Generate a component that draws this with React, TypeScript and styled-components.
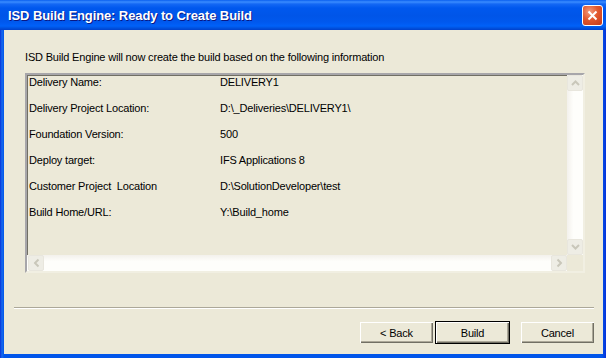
import React from "react";
import styled, { createGlobalStyle } from "styled-components";

const Global = createGlobalStyle`
  html, body { margin: 0; padding: 0; background: #ECE9D8; overflow: hidden; }
  #root { width: 606px; height: 358px; }
`;

const Window = styled.div`
  width: 606px;
  height: 358px;
  display: flex;
  flex-direction: column;
  background: linear-gradient(to right, #0831D9 0px, #166AEE 2px, #0055EA 4px, #0055EA 602px, #0831D9 606px);
  box-sizing: border-box;
  font-family: "Liberation Sans", Arial, sans-serif;
  font-size: 11px;
  letter-spacing: -0.18px;
  color: #000;
`;

const TitleBar = styled.div`
  height: 30px;
  flex: none;
  display: flex;
  align-items: center;
  justify-content: space-between;
  padding: 0 3px 0 8px;
  box-sizing: border-box;
  background: linear-gradient(
    to bottom,
    #0A5FEF 0px,
    #3A8CFF 2px,
    #1468F4 4px,
    #0058EE 8px,
    #0055E8 16px,
    #0058EE 22px,
    #0061F8 26px,
    #0052E0 28px,
    #0041CC 30px
  );
`;

const Title = styled.span`
  font-family: "Liberation Sans", Arial, sans-serif;
  font-weight: bold;
  font-size: 13px;
  color: #fff;
  text-shadow: 1px 1px 0 #0A1883;
  letter-spacing: -0.1px;
  margin-top: 1px;
`;

const CloseButton = styled.div`
  width: 21px;
  height: 21px;
  box-sizing: border-box;
  border: 1px solid #fff;
  border-radius: 3px;
  background: radial-gradient(circle at 35% 30%, #F29B7F 0%, #E2582E 45%, #C5391A 100%);
  display: flex;
  align-items: center;
  justify-content: center;
  margin-top: 1px;
`;

const Body = styled.div`
  flex: 1;
  margin: 0 3px 4px 4px;
  background: #ECE9D8;
  display: flex;
  flex-direction: column;
  padding-top: 21px;
`;

const Intro = styled.div`
  height: 13px;
  line-height: 13px;
  margin-left: 21px;
`;

const ListBox = styled.div`
  margin: 9px 0 0 21px;
  width: 560px;
  height: 200px;
  box-sizing: border-box;
  border-style: solid;
  border-width: 2px;
  border-color: #A7A6AA #F1EFE2 #F1EFE2 #A7A6AA;
  box-shadow: inset 1px 1px 0 #716F64, inset -1px -1px 0 #fff;
  display: grid;
  grid-template-columns: 540px 16px;
  grid-template-rows: 180px 16px;
  background: #ECE9D8;
`;

const Rows = styled.div`
  padding: 1px 0 0 2px;
  overflow: hidden;
`;

const Row = styled.div`
  display: grid;
  grid-template-columns: 191px 1fr;
  height: 26px;
  line-height: 13px;
`;

const Cell = styled.span`
  white-space: pre;
`;

const VTrack = styled.div`
  background: linear-gradient(to right, #F3F1EC, #FEFEFB 40%, #FEFEFB);
  display: flex;
  flex-direction: column;
  justify-content: space-between;
`;

const HTrack = styled.div`
  background: linear-gradient(to bottom, #F3F1EC, #FEFEFB 40%, #FEFEFB);
  display: flex;
  justify-content: space-between;
  padding-left: 1px;
`;

const Corner = styled.div`
  background: #ECE9D8;
`;

const ScrollBtn = styled.div`
  width: 16px;
  height: 16px;
  box-sizing: border-box;
  border: 1px solid #E8E6DD;
  border-radius: 2px;
  background: #EEEDE5;
  display: flex;
  align-items: center;
  justify-content: center;
`;

const Separator = styled.div`
  margin: 34px 9px 0 10px;
  height: 1px;
  background: #ACA899;
  border-bottom: 1px solid #fff;
`;

const ButtonRow = styled.div`
  display: flex;
  justify-content: flex-end;
  margin: 12px 8px 0 0;
`;

const Button = styled.div<{ $default?: boolean; $gap?: number }>`
  width: 75px;
  height: 23px;
  box-sizing: border-box;
  margin-left: ${(p) => p.$gap ?? 0}px;
  display: flex;
  align-items: center;
  justify-content: center;
  background: #ECE9D8;
  border: 1px solid ${(p) => (p.$default ? "#000" : "transparent")};
  box-shadow: inset 1px 1px 0 #fff, inset -1px -1px 0 #716F64, inset -2px -2px 0 #ACA899;
  font-size: 11px;
`;

const Chevron = ({ dir }: { dir: "up" | "down" | "left" | "right" }) => {
  const rot = { up: 0, right: 90, down: 180, left: 270 }[dir];
  return (
    <svg width="9" height="6" viewBox="0 0 9 6" style={{ transform: `rotate(${rot}deg)` }}>
      <path d="M1 5 L4.5 1.5 L8 5" fill="none" stroke="#C9C7BA" strokeWidth="2" />
    </svg>
  );
};

const rows: [string, string][] = [
  ["Delivery Name:", "DELIVERY1"],
  ["Delivery Project Location:", "D:\\_Deliveries\\DELIVERY1\\"],
  ["Foundation Version:", "500"],
  ["Deploy target:", "IFS Applications 8"],
  ["Customer Project  Location", "D:\\SolutionDeveloper\\test"],
  ["Build Home/URL:", "Y:\\Build_home"],
];

export default function App() {
  return (
    <>
      <Global />
      <Window>
        <TitleBar>
          <Title>ISD Build Engine: Ready to Create Build</Title>
          <CloseButton>
            <svg width="11" height="11" viewBox="0 0 11 11">
              <path d="M1.5 1.5 L9.5 9.5 M9.5 1.5 L1.5 9.5" stroke="#fff" strokeWidth="2" />
            </svg>
          </CloseButton>
        </TitleBar>
        <Body>
          <Intro>ISD Build Engine will now create the build based on the following information</Intro>
          <ListBox>
            <Rows>
              {rows.map(([k, v]) => (
                <Row key={k}>
                  <Cell>{k}</Cell>
                  <Cell>{v}</Cell>
                </Row>
              ))}
            </Rows>
            <VTrack>
              <ScrollBtn><Chevron dir="up" /></ScrollBtn>
              <ScrollBtn><Chevron dir="down" /></ScrollBtn>
            </VTrack>
            <HTrack>
              <ScrollBtn><Chevron dir="left" /></ScrollBtn>
              <ScrollBtn><Chevron dir="right" /></ScrollBtn>
            </HTrack>
            <Corner />
          </ListBox>
          <Separator />
          <ButtonRow>
            <Button>&lt; Back</Button>
            <Button $default $gap={1}>Build</Button>
            <Button $gap={10}>Cancel</Button>
          </ButtonRow>
        </Body>
      </Window>
    </>
  );
}
